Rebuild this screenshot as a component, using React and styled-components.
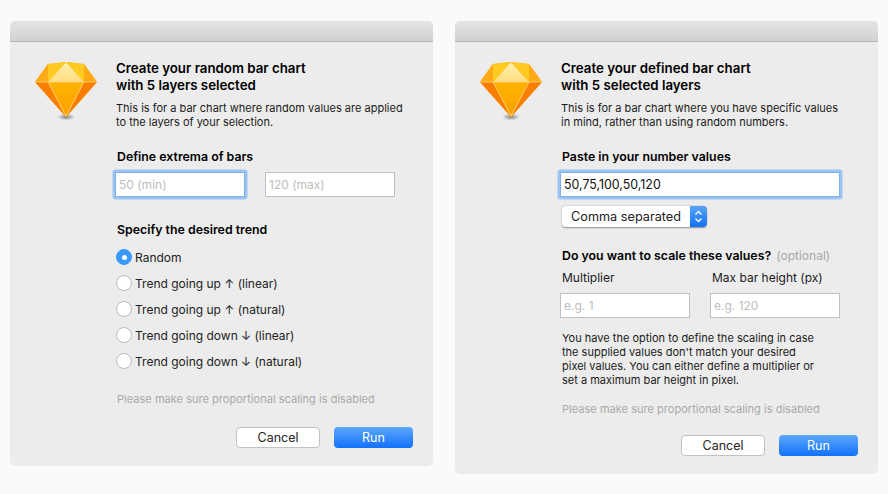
import styled, { createGlobalStyle } from "styled-components";

const Global = createGlobalStyle`
    html, body {
        margin: 0;
        background: #FAFAFA;
    }
    * {
        box-sizing: border-box;
    }
`;

function Diamond() {
    return (
        <IconSvg viewBox="0 0 62 60" width="62" height="60">
            <defs>
                <radialGradient id="shadow" cx="50%" cy="50%" r="50%">
                    <stop offset="0%" stopColor="#666" stopOpacity="0.8" />
                    <stop offset="100%" stopColor="#777" stopOpacity="0" />
                </radialGradient>
                <linearGradient id="crown" x1="0" y1="0" x2="0" y2="1">
                    <stop offset="0%" stopColor="#FFF0B0" />
                    <stop offset="100%" stopColor="#FFDD80" />
                </linearGradient>
                <linearGradient id="middle" x1="0" y1="0" x2="0" y2="1">
                    <stop offset="0%" stopColor="#FFB300" />
                    <stop offset="100%" stopColor="#FF9F00" />
                </linearGradient>
            </defs>
            <ellipse cx="31" cy="55" rx="9" ry="3.5" fill="url(#shadow)" />
            <polygon points="13,2 31,0 49,2 62,20 31,55 0,20" fill="#FFAE00" />
            <polygon points="0,20 13,20 31,55" fill="#F97E00" />
            <polygon points="62,20 49,20 31,55" fill="#F97E00" />
            <polygon points="13,20 49,20 31,55" fill="url(#middle)" />
            <polygon points="13,20 31,0 49,20" fill="url(#crown)" />
            <polygon points="13,2 31,0 13,20" fill="#FFCB22" />
            <polygon points="49,2 31,0 49,20" fill="#FFCB22" />
            <polygon points="13,2 13,20 0,20" fill="#FFA914" />
            <polygon points="49,2 49,20 62,20" fill="#FFA914" />
            <path d="M0 20H62M13 20L31 54M49 20L31 54" stroke="#FFD98A" strokeWidth="0.8" fill="none" />
        </IconSvg>
    );
}

function Radio({ label, checked }) {
    return (
        <RadioRow>
            <RadioDot $checked={checked} />
            <span>{label}</span>
        </RadioRow>
    );
}

function Buttons({ top }) {
    return (
        <ButtonRow $top={top}>
            <CancelButton>Cancel</CancelButton>
            <RunButton>Run</RunButton>
        </ButtonRow>
    );
}

export default function App() {
    return (
        <Page>
            <Global />
            <Window>
                <TitleBar />
                <Body>
                    <Diamond />
                    <Content>
                        <Title>Create your random bar chart<br />with 5 layers selected</Title>
                        <Text>This is for a bar chart where random values are applied<br />to the layers of your selection.</Text>
                        <Heading $top={20}>Define extrema of bars</Heading>
                        <Fields $top={7}>
                            <Field $focus placeholder="50 (min)" />
                            <Field placeholder="120 (max)" />
                        </Fields>
                        <Heading $top={25}>Specify the desired trend</Heading>
                        <RadioList>
                            <Radio checked label="Random" />
                            <Radio label="Trend going up ↑ (linear)" />
                            <Radio label="Trend going up ↑ (natural)" />
                            <Radio label="Trend going down ↓ (linear)" />
                            <Radio label="Trend going down ↓ (natural)" />
                        </RadioList>
                        <Note $top={18}>Please make sure proportional scaling is disabled</Note>
                        <Buttons top={21} />
                    </Content>
                </Body>
            </Window>
            <Window>
                <TitleBar />
                <Body>
                    <Diamond />
                    <Content>
                        <Title>Create your defined bar chart<br />with 5 selected layers</Title>
                        <Text>This is for a bar chart where you have specific values<br />in mind, rather than using random numbers.</Text>
                        <Heading $top={20}>Paste in your number values</Heading>
                        <WideField $focus defaultValue="50,75,100,50,120" />
                        <Select>
                            <SelectLabel>Comma separated</SelectLabel>
                            <Stepper>
                                <svg width="9" height="15" viewBox="0 0 9 15">
                                    <path d="M1.5 5.5L4.5 2.5L7.5 5.5M1.5 9.5L4.5 12.5L7.5 9.5" stroke="#fff" strokeWidth="1.3" fill="none" />
                                </svg>
                            </Stepper>
                        </Select>
                        <Heading $top={21}>Do you want to scale these values? <Optional>(optional)</Optional></Heading>
                        <Fields $top={6}>
                            <Column>
                                <Label>Multiplier</Label>
                                <Field placeholder="e.g. 1" />
                            </Column>
                            <Column>
                                <Label>Max bar height (px)</Label>
                                <Field placeholder="e.g. 120" />
                            </Column>
                        </Fields>
                        <Text $top={13} $inset>
                            You have the option to define the scaling in case<br />
                            the supplied values don't match your desired<br />
                            pixel values. You can either define a multiplier or<br />
                            set a maximum bar height in pixel.
                        </Text>
                        <Note $top={15}>Please make sure proportional scaling is disabled</Note>
                        <Buttons top={19} />
                    </Content>
                </Body>
            </Window>
        </Page>
    );
}

/*::::: STYLES :::::*/
const Page = styled.div`
    width: 888px;
    height: 494px;
    padding: 21px 10px 0;
    display: flex;
    align-items: flex-start;
    gap: 22px;
    overflow: hidden;
    font-family: Inter, "Liberation Sans", sans-serif;
    color: #1A1A1A;
`;
const Window = styled.div`
    width: 423px;
    background: #ECECEC;
    border-radius: 5px;
    overflow: hidden;
`;
const TitleBar = styled.div`
    height: 21px;
    background: linear-gradient(#E6E4E6, #D2D0D2);
    border-bottom: 1px solid #B5B3B5;
`;
const Body = styled.div`
    display: flex;
    align-items: flex-start;
    padding: 18px 20px 18px 25px;
`;
const IconSvg = styled.svg`
    flex: none;
    margin-top: 2px;
`;
const Content = styled.div`
    margin-left: 19px;
    width: 298px;
    display: flex;
    flex-direction: column;
`;
const Title = styled.div`
    font-size: 13.3px;
    font-weight: 600;
    line-height: 17px;
    color: #000;
`;
const Text = styled.div`
    margin-top: ${(props) => props.$top ?? 7}px;
    padding-left: ${(props) => (props.$inset ? 1 : 0)}px;
    font-size: 11px;
    line-height: 14px;
    color: #1A1A1A;
`;
const Heading = styled.div`
    margin-top: ${(props) => props.$top}px;
    padding-left: 1px;
    font-size: 12.35px;
    font-weight: 600;
    line-height: 16px;
    color: #000;
`;
const Optional = styled.span`
    margin-left: 2px;
    font-size: 12px;
    font-weight: 400;
    color: #A8A8A8;
`;
const Fields = styled.div`
    margin-top: ${(props) => props.$top}px;
    margin-left: -1px;
    display: flex;
    gap: 20px;
`;
const Column = styled.div`
    display: flex;
    flex-direction: column;
    gap: 7px;
`;
const Label = styled.div`
    padding-left: 2px;
    font-size: 12px;
    line-height: 16px;
`;
const Field = styled.input`
    width: 130px;
    height: 25px;
    margin: 0;
    padding: 0 3px;
    background: #FFF;
    border: 1px solid ${(props) => (props.$focus ? "#7FB0EA" : "#C0C0C0")};
    box-shadow: ${(props) => (props.$focus ? "0 0 0 2.5px #9CC4F3" : "none")};
    border-radius: ${(props) => (props.$focus ? 1 : 0)}px;
    outline: none;
    font-family: inherit;
    font-size: 12px;
    color: #111;
    &::placeholder {
        color: #BDBDBD;
        opacity: 1;
    }
`;
const WideField = styled(Field)`
    width: 280px;
    margin-top: 7px;
    margin-left: -1px;
    font-size: 12.4px;
`;
const Select = styled.div`
    width: 145px;
    height: 21px;
    margin-top: 9px;
    margin-left: 1px;
    display: flex;
    background: #FFF;
    border-radius: 4px;
    box-shadow: 0 0.5px 1.5px rgba(0, 0, 0, 0.4);
    overflow: hidden;
`;
const SelectLabel = styled.div`
    flex: 1;
    padding-left: 9px;
    font-size: 12.7px;
    line-height: 21px;
    color: #222;
`;
const Stepper = styled.div`
    width: 17px;
    display: flex;
    align-items: center;
    justify-content: center;
    background: linear-gradient(#57A4FB, #1271F0);
`;
const RadioList = styled.div`
    margin-top: 6px;
    display: flex;
    flex-direction: column;
`;
const RadioRow = styled.div`
    height: 26px;
    display: flex;
    align-items: center;
    gap: 3px;
    font-size: 12px;
    color: #222;
`;
const RadioDot = styled.div`
    width: 16px;
    height: 16px;
    border-radius: 50%;
    background: ${(props) => (props.$checked ? "#3B99FC" : "#FFF")};
    border: 1.5px solid ${(props) => (props.$checked ? "#3B99FC" : "#BCBCBC")};
    display: flex;
    align-items: center;
    justify-content: center;
    &::after {
        content: "";
        width: 5px;
        height: 5px;
        border-radius: 50%;
        background: #FFF;
        display: ${(props) => (props.$checked ? "block" : "none")};
    }
`;
const Note = styled.div`
    margin-top: ${(props) => props.$top}px;
    padding-left: 1px;
    font-size: 11px;
    letter-spacing: 0.03px;
    line-height: 14px;
    color: #A9A9A9;
`;
const ButtonRow = styled.div`
    margin-top: ${(props) => props.$top}px;
    display: flex;
    justify-content: flex-end;
    gap: 14px;
`;
const CancelButton = styled.button`
    width: 84px;
    height: 21px;
    padding: 0;
    background: #FFF;
    border: 1px solid #C2C2C2;
    border-radius: 4px;
    font-family: inherit;
    font-size: 12.5px;
    color: #222;
`;
const RunButton = styled.button`
    width: 79px;
    height: 21px;
    padding: 0;
    background: linear-gradient(#5EA8FB, #1170FA);
    border: none;
    border-radius: 4px;
    font-family: inherit;
    font-size: 12.5px;
    color: #FFF;
`;
